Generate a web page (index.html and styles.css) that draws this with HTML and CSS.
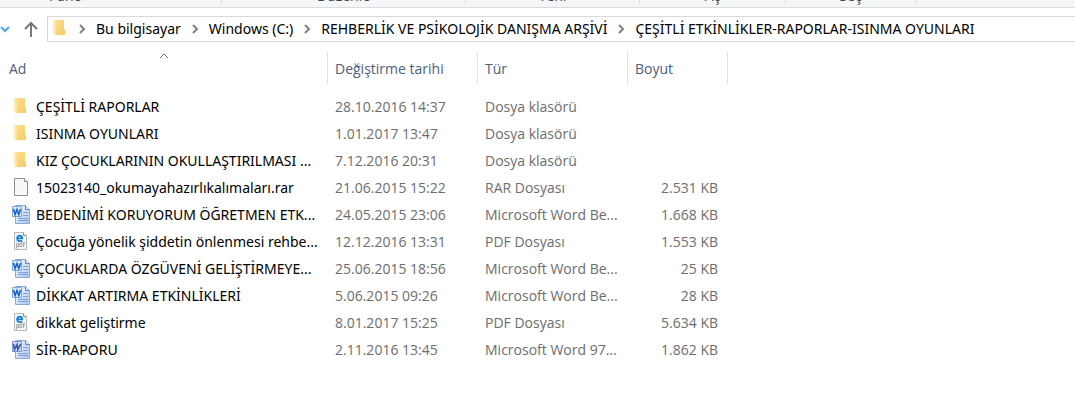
FILE: index.html
```html
<!DOCTYPE html>
<html lang="tr">
<head>
<meta charset="utf-8">
<meta name="viewport" content="width=device-width, initial-scale=1">
<title>ÇEŞİTLİ ETKİNLİKLER-RAPORLAR-ISINMA OYUNLARI</title>
<link rel="stylesheet" href="styles.css">
</head>
<body>
<svg class="sprite" aria-hidden="true">
  <defs>
    <linearGradient id="gold" x1="0" x2="1" y1="0" y2="1"><stop offset="0" stop-color="#ffe08a"/><stop offset="1" stop-color="#f4cb68"/></linearGradient>
    <linearGradient id="sheet" x1="0" x2="1" y1="0" y2="1"><stop offset="0" stop-color="#fbfdff"/><stop offset="1" stop-color="#a9c4ee"/></linearGradient>
    <symbol id="folder" viewBox="0 0 20 20">
      <path d="M4 1h10v9l1 1v5H4z" fill="url(#gold)"/>
      <path d="M3 1l3 2v14l-3-2z" fill="#ffebb4"/>
      <path d="M6 3v13" stroke="#f7dc93"/>
    </symbol>
    <symbol id="blank" viewBox="0 0 20 20">
      <path d="M3.5 .5h10l3 3v14h-13z" fill="#f8f8f8" stroke="#8f8f8f"/>
      <path d="M13.500 .5v3h3" fill="#fff" stroke="#8f8f8f"/>
    </symbol>
    <symbol id="page" viewBox="0 0 20 20">
      <path d="M4.500 .5h10l4 4v14h-14z" fill="url(#sheet)" stroke="#8aa8da"/>
      <path d="M14.500 .5v4h4" fill="#dce8fa" stroke="#5f83c0"/>
      <path d="M12 7.500h5M12 10.500h5M7 13.500h10M7 15.500h10" stroke="#7d9dd4"/>
    </symbol>
    <symbol id="word" viewBox="0 0 20 20">
      <use href="#page" width="20" height="20"/>
      <path d="M1.500 1.500h9v10h-9z" fill="#d9eaff" stroke="#7da8e0"/>
      <path d="M2.500 4l1.600 5.500L6 4.500l1.800 5L9.600 4" fill="none" stroke="#1a62c6" stroke-width="1.600"/>
    </symbol>
    <symbol id="word97" viewBox="0 0 20 20">
      <use href="#page" width="20" height="20"/>
      <path d="M1.500 1.500h9v10h-9z" fill="#cfdcf7" stroke="#7f93d0"/>
      <path d="M2.500 4l1 5.500L6 4.500l.8 5L9.800 4" fill="none" stroke="#3b56b0" stroke-width="1.600"/>
    </symbol>
    <symbol id="pdf" viewBox="0 0 20 20">
      <path d="M3.500 .5h9l3 3v14h-12z" fill="#f5f6f6" stroke="#b8b8b8"/>
      <path d="M12.500 .5v3h3" fill="#fff" stroke="#8f8f8f"/>
      <path d="M5.500 6.300h5.700C11 2.600 6.300 2.700 6.100 6.300 6 9.400 9 9.700 11.200 8.400" fill="none" stroke="#0f7fdb" stroke-width="1.800"/>
      <path d="M5.500 16.500v-5h2v3h-2M10.800 10v4.500H8.700v-3h2.100M12.500 15v-4.500h1.800M12 12.500h2" fill="none" stroke="#a2a2a2" stroke-width=".9"/>
    </symbol>
    <symbol id="chevron" viewBox="0 0 8 10"><path d="M2 1l4 4-4 4" fill="none" stroke="#808080" stroke-width="2"/></symbol>
  </defs>
</svg>

<header class="ribbon">
  <div class="group clipboard">Pano</div>
  <div class="group organize">Düzenle</div>
  <div class="group new">Yeni</div>
  <div class="group open">Aç</div>
  <div class="group select">Seç</div>
</header>

<nav class="navbar" aria-label="Adres çubuğu">
  <button class="recent" type="button" aria-label="Son konumlar"><svg width="10" height="8" viewBox="0 0 10 8"><path d="M1 2l4 4 4-4" fill="none" stroke="#4aa5f5" stroke-width="2"/></svg></button>
  <button class="up" type="button" aria-label="Yukarı"><svg width="16" height="16" viewBox="0 0 16 16"><path d="M8 16V2M2 8l6-6 6 6" fill="none" stroke="#777" stroke-width="2"/></svg></button>
  <div class="address">
    <svg class="icon"><use href="#folder"/></svg>
    <svg class="chev"><use href="#chevron"/></svg>
    <a href="#">Bu bilgisayar</a>
    <svg class="chev"><use href="#chevron"/></svg>
    <a href="#">Windows (C:)</a>
    <svg class="chev"><use href="#chevron"/></svg>
    <a href="#">REHBERLİK VE PSİKOLOJİK DANIŞMA ARŞİVİ</a>
    <svg class="chev"><use href="#chevron"/></svg>
    <a href="#">ÇEŞİTLİ ETKİNLİKLER-RAPORLAR-ISINMA OYUNLARI</a>
  </div>
</nav>

<main>
<table class="files">
  <colgroup><col class="c-name"><col class="c-date"><col class="c-type"><col class="c-size"></colgroup>
  <thead>
    <tr>
      <th scope="col" aria-sort="ascending"><div class="head first"><svg class="sort" viewBox="0 0 10 6"><path d="M1 5l4-4 4 4" fill="none" stroke="#6b6b6b"/></svg>Ad</div></th>
      <th scope="col"><div class="head">Değiştirme tarihi</div></th>
      <th scope="col"><div class="head">Tür</div></th>
      <th scope="col"><div class="head">Boyut</div></th>
    </tr>
  </thead>
  <tbody>
    <tr><td><div class="name"><svg class="icon"><use href="#folder"/></svg>ÇEŞİTLİ RAPORLAR</div></td><td>28.10.2016 14:37</td><td>Dosya klasörü</td><td></td></tr>
    <tr><td><div class="name"><svg class="icon"><use href="#folder"/></svg>ISINMA OYUNLARI</div></td><td>1.01.2017 13:47</td><td>Dosya klasörü</td><td></td></tr>
    <tr><td><div class="name"><svg class="icon"><use href="#folder"/></svg>KIZ ÇOCUKLARININ OKULLAŞTIRILMASI ...</div></td><td>7.12.2016 20:31</td><td>Dosya klasörü</td><td></td></tr>
    <tr><td><div class="name"><svg class="icon"><use href="#blank"/></svg>15023140_okumayahazırlıkalımaları.rar</div></td><td>21.06.2015 15:22</td><td>RAR Dosyası</td><td>2.531 KB</td></tr>
    <tr><td><div class="name"><svg class="icon"><use href="#word"/></svg>BEDENİMİ KORUYORUM ÖĞRETMEN ETK...</div></td><td>24.05.2015 23:06</td><td>Microsoft Word Be...</td><td>1.668 KB</td></tr>
    <tr><td><div class="name"><svg class="icon"><use href="#pdf"/></svg>Çocuğa yönelik şiddetin önlenmesi rehbe...</div></td><td>12.12.2016 13:31</td><td>PDF Dosyası</td><td>1.553 KB</td></tr>
    <tr><td><div class="name"><svg class="icon"><use href="#word"/></svg>ÇOCUKLARDA ÖZGÜVENİ GELİŞTİRMEYE...</div></td><td>25.06.2015 18:56</td><td>Microsoft Word Be...</td><td>25 KB</td></tr>
    <tr><td><div class="name"><svg class="icon"><use href="#word"/></svg>DİKKAT ARTIRMA ETKİNLİKLERİ</div></td><td>5.06.2015 09:26</td><td>Microsoft Word Be...</td><td>28 KB</td></tr>
    <tr><td><div class="name"><svg class="icon"><use href="#pdf"/></svg>dikkat geliştirme</div></td><td>8.01.2017 15:25</td><td>PDF Dosyası</td><td>5.634 KB</td></tr>
    <tr><td><div class="name"><svg class="icon"><use href="#word97"/></svg>SİR-RAPORU</div></td><td>2.11.2016 13:45</td><td>Microsoft Word 97...</td><td>1.862 KB</td></tr>
  </tbody>
</table>
</main>
</body>
</html>
```
FILE: styles.css
```css
* { box-sizing: border-box; }

body {
  margin: 0;
  background: #fff;
  color: #000;
  font: 14px/20px "Open Sans", "Noto Sans", sans-serif;
}

.sprite { position: absolute; width: 0; height: 0; }
.icon { flex: none; width: 20px; height: 20px; }

/* Lower edge of the ribbon */
.ribbon {
  display: flex;
  align-items: flex-end;
  height: 8px;
  overflow: hidden;
  background: #f5f6f7;
  border-bottom: 1px solid #dadbdc;
}
.group {
  flex: none;
  height: 20px;
  margin-bottom: 3px;
  border-right: 1px solid #dcdddf;
  color: #444;
  text-align: center;
  font-size: 14px;
  line-height: 14px;
  padding-top: 5px;
}
.clipboard { width: 222px; padding-right: 90px; }
.organize { width: 244px; }
.new { width: 174px; }
.open { width: 146px; }
.select { width: 130px; }

.navbar {
  display: flex;
  align-items: center;
  padding-top: 8px;
}
.navbar button {
  display: flex;
  padding: 0;
  border: 0;
  background: none;
}
.recent { width: 23px; }
.up { width: 24px; }
.address {
  flex: 1;
  display: flex;
  align-items: center;
  height: 26px;
  padding-left: 2px;
  border: 1px solid #d9d9d9;
  border-right: 0;
  white-space: nowrap;
}
.address, .name { font-family: "Noto Sans", "Open Sans", sans-serif; }
.address a { color: #000; text-decoration: none; }
.chev { flex: none; width: 8px; height: 10px; margin: 0 10px; }
.icon + .chev { margin-left: 8px; }

.files {
  margin-top: 10px;
  border-collapse: collapse;
  table-layout: fixed;
  width: 728px;
}
.c-name { width: 328px; }
.c-date, .c-type { width: 150px; }
.c-size { width: 100px; }

th {
  padding: 0 0 9px;
  color: #4c607a;
  font-weight: 400;
  text-align: left;
}
.head {
  position: relative;
  height: 32px;
  padding: 7px 0 0 7px;
  border-right: 1px solid #e2e2e2;
}
.first { padding-left: 9px; }
.sort {
  position: absolute;
  top: 1px;
  left: 50%;
  width: 10px;
  height: 6px;
  transform: translateX(-50%);
}
td {
  height: 27px;
  padding: 0 0 0 7px;
  color: #6d6d6d;
  white-space: nowrap;
}
td:first-child { padding-left: 11px; color: #000; }
td:last-child { padding-right: 10px; text-align: right; }
.name { display: flex; align-items: center; gap: 5px; }
```
